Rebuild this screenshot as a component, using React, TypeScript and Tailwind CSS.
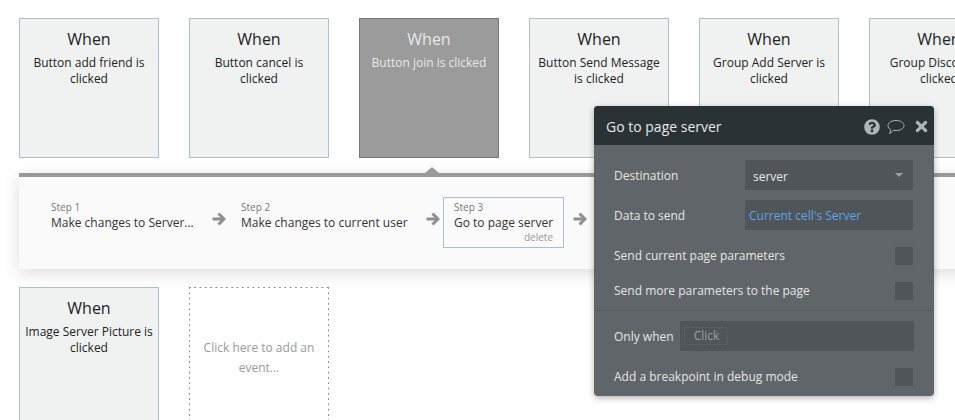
import React from "react";
import { FaQuestionCircle, FaTimes } from "react-icons/fa";

function Card({ text, active }: { text: string; active?: boolean }) {
  return (
    <div
      className={
        "h-[140px] w-[140px] shrink-0 border px-[5px] pt-[9px] text-center " +
        (active
          ? "border-[#777777] bg-[#9b9b9b] text-[#e8e8e8]"
          : "border-[#b0bfc6] bg-[#f0f2f2] text-[#222222]")
      }
    >
      <div className="text-[16px] leading-[22px]">When</div>
      <div className="mt-[5px] text-[12px] leading-[16px]">{text}</div>
    </div>
  );
}

function Step({ n, title, w, selected }: { n: number; title: string; w: string; selected?: boolean }) {
  return (
    <div
      className={
        "shrink-0 h-[51px] px-[10px] pt-[2px] " +
        w +
        (selected ? " border border-[#b0bfc6]" : " border border-transparent")
      }
    >
      <div className="text-[10px] leading-[14px] text-[#777777]">Step {n}</div>
      <div className="mt-[1px] whitespace-nowrap text-[12px] leading-[16px] text-[#333333]">{title}</div>
      {selected && <div className="-mt-[1px] text-right text-[10px] leading-[14px] text-[#999999]">delete</div>}
    </div>
  );
}

function Arrow({ className }: { className: string }) {
  return (
    <svg
      viewBox="0 0 14 14"
      className={"h-[14px] w-[14px] shrink-0 text-[#8f8f8f] " + className}
      fill="none"
      stroke="currentColor"
      strokeWidth="3"
    >
      <path d="M0.500 7H12" />
      <path d="M6.500 1.500L12 7L6.500 12.500" />
    </svg>
  );
}

function Check() {
  return <div className="h-[18px] w-[18px] shrink-0 bg-[#50555a]" />;
}

function Row({ label }: { label: string }) {
  return (
    <div className="mt-[17px] flex h-[18px] items-center justify-between pl-[20px] pr-[21px]">
      <span className="text-[12px] text-[#e4e6e6]">{label}</span>
      <Check />
    </div>
  );
}

export default function App() {
  return (
    <div className="relative h-[420px] w-[955px] overflow-hidden bg-white font-['Open_Sans',sans-serif]">
      <div className="flex gap-[30px] pl-[19px] pt-[18px]">
        <Card text="Button add friend is clicked" />
        <Card text="Button cancel is clicked" />
        <Card text="Button join is clicked" active />
        <Card text="Button Send Message is clicked" />
        <Card text="Group Add Server is clicked" />
        <Card text="Group Discover is clicked" />
      </div>

      <div className="relative ml-[19px] mt-[15px] h-[96px] w-[960px] border-t-[4px] border-[#999999] bg-[#fafafa] shadow-[0_4px_16px_rgba(0,0,0,0.14)]">
        <div className="absolute left-[406px] top-[-10px] h-0 w-0 border-x-[7px] border-b-[6px] border-x-transparent border-b-[#999999]" />
        <div className="flex items-center pl-[21px] pt-[20px]">
          <Step n={1} title="Make changes to Server..." w="w-[172px]" />
          <Arrow className="mb-[7px]" />
          <Step n={2} title="Make changes to current user" w="w-[196px] ml-[4px]" />
          <Arrow className="mb-[7px]" />
          <Step n={3} title="Go to page server" w="w-[121px] ml-[3px]" selected />
          <Arrow className="mb-[7px] ml-[9px]" />
        </div>
      </div>

      <div className="mt-[18px] flex gap-[30px] pl-[19px]">
        <Card text="Image Server Picture is clicked" />
        <div className="flex h-[140px] w-[140px] shrink-0 items-start justify-center px-[11px] pt-[51px] text-center text-[12px] leading-[20px] text-[#999999] [background:linear-gradient(to_right,#888888_2px,transparent_2px)_top_left/5.300px_1px_repeat-x,linear-gradient(to_bottom,#888888_2px,transparent_2px)_top_left/1px_5.300px_repeat-y,linear-gradient(to_bottom,#888888_2px,transparent_2px)_top_right/1px_5.300px_repeat-y]">
          Click here to add an event...
        </div>
      </div>

      <div className="absolute left-[594px] top-[106px] h-[290px] w-[340px] overflow-hidden rounded-[4px] bg-[#5f6568] shadow-[0_2px_6px_rgba(0,0,0,0.3)]">
        <div className="flex h-[39px] items-center justify-between bg-[#2b3235] pl-[12px] pr-[5px]">
          <span className="pt-[2px] text-[14px] text-[#e6e8e8]">Go to page server</span>
          <div className="flex items-center gap-[7px] pt-[2px] text-[#aeb6ba]">
            <FaQuestionCircle className="h-[16px] w-[16px]" />
            <svg viewBox="0 0 18 16" className="h-[16px] w-[18px]" fill="none" stroke="currentColor" strokeWidth="1">
              <path d="M9 1.500c4.400 0 8 2 8 5s-3.600 5-8 5c-.9 0-1.700-.1-2.500-.2C5.500 12.600 3.800 14 2.500 14.500c.8-1 1.200-2.200 1.200-3.800C2 9.700 1 8.200 1 6.500c0-3 3.600-5 8-5z" />
            </svg>
            <FaTimes className="ml-[2px] h-[17px] w-[15px]" />
          </div>
        </div>

        <div className="mt-[15px] flex h-[30px] items-center pl-[20px] pr-[21px]">
          <span className="w-[131px] pt-[1px] text-[12px] text-[#e4e6e6]">Destination</span>
          <div className="flex h-[30px] flex-1 items-center justify-between bg-[#50555a] pl-[8px] pr-[10px] text-[12px] text-[#e8e8e8]">
            <span className="pt-[4px]">server</span>
            <div className="h-0 w-0 border-x-[4px] border-t-[4px] border-x-transparent border-t-[#9aa0a3]" />
          </div>
        </div>
        <div className="mt-[10px] flex h-[30px] items-center pl-[20px] pr-[21px]">
          <span className="w-[131px] pt-[1px] text-[12px] text-[#e4e6e6]">Data to send</span>
          <div className="flex h-[30px] flex-1 items-center bg-[#50555a] pl-[4px] pt-[1px] text-[12px] text-[#5fa3e8]">
            Current cell's Server
          </div>
        </div>

        <Row label="Send current page parameters" />
        <Row label="Send more parameters to the page" />

        <div className="mt-[10px] border-t border-[#565b5e]" />

        <div className="mt-[10px] flex h-[30px] items-center pl-[20px] pr-[20px]">
          <span className="w-[66px] pt-[1px] text-[12px] text-[#e4e6e6]">Only when</span>
          <div className="flex h-[30px] flex-1 items-center bg-[#50555a] pl-[4px]">
            <span className="h-[18px] w-[44px] rounded-[2px] border border-dashed border-[#5c6265] pl-[1px] text-center text-[12px] leading-[16px] text-[#999ea0]">
              Click
            </span>
          </div>
        </div>

        <Row label="Add a breakpoint in debug mode" />
      </div>
    </div>
  );
}
